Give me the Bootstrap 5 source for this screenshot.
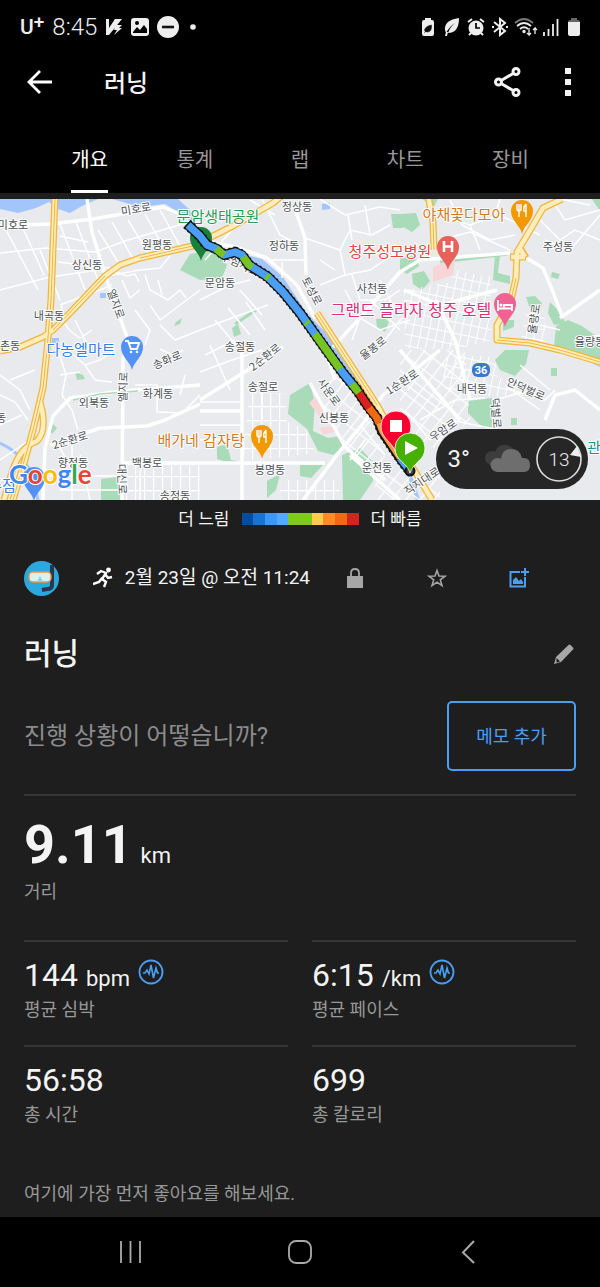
<!DOCTYPE html>
<html lang="ko">
<head>
<meta charset="utf-8">
<meta name="viewport" content="width=device-width, initial-scale=1">
<title>러닝</title>
<link href="https://cdn.jsdelivr.net/npm/bootstrap@5.3.0/dist/css/bootstrap.min.css" rel="stylesheet">
<style>
  :root { --ink: #f4f4f4; --dim: #989898; --line: #363636; --accent: #4a9ff5; --panel: #1e1e1e; }
  body { font-family: Roboto, "Noto Sans CJK KR", sans-serif; background: var(--panel); color: var(--ink); }
  svg { display: block; flex: none; }
  button { color: inherit; }
  .status { height: 54px; padding: 0 16px 0 20px; color: #eee; }
  .clock { font-size: 24px; line-height: 24px; font-weight: 300; }
  .carrier { font-size: 21px; line-height: 24px; font-weight: 500; }
  .carrier sup { font-size: 19px; top: -6px; line-height: 0; }
  .appbar { height: 56px; padding: 0 8px 0 16px; }
  .appbar h1 { font-size: 24px; line-height: 32px; margin-left: 40px; padding-top: 3px; }
  .icon-btn { background: none; border: 0; padding: 0; display: flex; align-items: center; justify-content: center; width: 48px; height: 48px; }
  .app-actions { gap: 12px; }
  .tabs { padding: 0 37px; height: 83px; }
  .tab { flex: 1 1 0; background: none; border: 0; padding: 0; display: flex; align-items: flex-end; justify-content: center; color: var(--dim); font-size: 20px; line-height: 24px; }
  .tab span { padding-bottom: 18px; border-bottom: 3px solid transparent; }
  .tab.active { color: #fff; }
  .tab.active span { border-color: #fff; }
  .map-box { margin-top: 6px; }
  .map-box > svg { width: 100%; height: auto; }
  .map-box text { font-family: "Noto Sans CJK KR", sans-serif; text-anchor: middle; paint-order: stroke; stroke: #fff; stroke-width: 2px; stroke-linejoin: round; }
  .area text { font-size: 11px; fill: #4a4f55; }
  .poi text { font-size: 15px; }
  .poi .wide-label { font-size: 16px; }
  .map-box .logo { font-family: Lato, sans-serif; font-size: 26px; font-weight: 700; text-anchor: start; }
  .map-box .shield { font-family: Roboto, sans-serif; font-size: 11px; font-weight: 700; stroke: none; fill: #fff; }
  .weather { right: 12px; bottom: 11px; height: 60px; padding: 0 6px 0 12px; background: #262626; font-size: 24px; }
  .map-box .wind { font-family: Roboto, sans-serif; font-size: 19px; font-weight: 300; stroke: none; fill: #eee; }
  .legend-row { height: 38px; font-size: 17px; line-height: 24px; gap: 12px; }
  .scale { width: 117px; height: 12px; }
  .page-pad { padding: 0 24px; }
  .meta { height: 80px; padding-right: 16px; }
  .meta .icon-btn { width: 82px; }
  .when { font-size: 19px; line-height: 24px; }
  .name-row { height: 72px; }
  .name-row h2 { font-size: 30px; line-height: 40px; }
  .appbar h1, .name-row h2 { font-weight: 500; }
  .name-row .icon-btn { width: 24px; }
  .note-row { height: 92px; }
  .note-row p { font-size: 24px; line-height: 32px; color: #8c8c8c; }
  .note-btn { width: 129px; height: 70px; font-size: 18px; --bs-btn-color: var(--accent); --bs-btn-border-color: var(--accent); --bs-btn-border-width: 2px; --bs-btn-border-radius: 5px; }
  .headline { margin-top: 12px; padding: 21px 0 36px; border-top: 2px solid var(--line); }
  .headline strong { font-size: 54px; line-height: 56px; font-weight: 700; }
  .headline .label { margin-top: 7px; }
  .unit { font-size: 22px; }
  .label { font-size: 18px; line-height: 24px; color: var(--dim); }
  .stats { display: grid; grid-template-columns: 1fr 1fr; column-gap: 24px; }
  .stat { border-top: 2px solid var(--line); padding: 13px 0 23px; }
  .value { font-family: Roboto, sans-serif; font-size: 32px; line-height: 40px; height: 40px; margin-bottom: 3px; }
  .likes { font-size: 18px; line-height: 24px; color: var(--dim); padding: 32px 0 11px; }
  .sysnav { height: 70px; padding: 0 46px; color: #aaa; }
  .sysnav .icon-btn { width: 168px; }
</style>
</head>
<body class="d-flex flex-column min-vh-100">
<header class="bg-black">
  <div class="status d-flex align-items-center justify-content-between">
    <div class="d-flex align-items-center gap-2">
      <span class="carrier">U<sup>+</sup></span>
      <span class="clock">8:45</span>
      <svg width="18" height="18" viewBox="0 0 18 18"><path d="M1 1h3v9l6-9h7L4 17H1zM11 7h6l-3 3h3l-8 7 3-5H9z" fill="#eee"/></svg>
      <svg width="18" height="18" viewBox="0 0 18 18"><rect width="18" height="18" rx="3" fill="#eee"/><circle cx="6" cy="5" r="2"/><path d="M2 14l4-5 3 3 4-5 3 4v4H2z"/></svg>
      <svg width="22" height="22" viewBox="0 0 22 22"><circle cx="11" cy="11" r="11" fill="#eee"/><path d="M5 11h12" stroke="#111" stroke-width="2.600"/></svg>
      <svg width="12" height="6" viewBox="0 0 12 6"><circle cx="6" cy="3" r="2.800" fill="#eee"/></svg>
    </div>
    <div class="d-flex align-items-center gap-1">
      <svg width="20" height="20" viewBox="0 0 20 20"><path d="M7 1h6v2h1q2 0 2 2v12q0 2-2 2H6q-2 0-2-2V5q0-2 2-2h1z" fill="#eee"/><path d="M13.500 8q.5 7-4 7-3 0-3-2 1-4 7-5M6 16l5-5" fill="#111" stroke="#111" stroke-width=".5"/></svg>
      <svg width="20" height="20" viewBox="0 0 20 20"><path d="M17 1Q2 3 3 13l1 3Q8 9 13 6 8 10 6 16q11 0 11-15M4 15l-1 4h2l1-4" fill="#eee"/></svg>
      <svg width="20" height="20" viewBox="0 0 20 20"><circle cx="10" cy="11" r="7.500" fill="#eee"/><path d="M2 5l4-3m12 3l-4-3M5 16l-2 2m12-2l2 2" stroke="#eee" stroke-width="2"/><path d="M10 6v5h4" stroke="#000" stroke-width="1.700" fill="none"/></svg>
      <svg width="20" height="20" viewBox="0 0 20 20" fill="none" stroke="#eee" stroke-width="2"><path d="M4 5l11 9-5 4V2l5 4-11 9M2 10h2m12 0h2"/></svg>
      <svg width="24" height="20" viewBox="0 0 24 20" fill="none" stroke="#eee" stroke-width="1.800"><path d="M1 6q9-8 18 0" stroke="#777"/><path d="M3 9q7-6 14 0M6 12q4-3.500 8 0"/><circle cx="10" cy="14.500" r=".8"/><path d="M15 11v7l-2-2m2 2l2-2m4 1v-6l-2 2m2-2l2 2" stroke-width="1.300"/></svg>
      <svg width="18" height="20" viewBox="0 0 18 20" stroke="#eee" stroke-width="1.800"><path d="M2 19v-4M6.500 19v-7M11 19V7M15.500 19V2"/></svg>
      <svg width="20" height="20" viewBox="0 0 20 20"><path d="M7 1h6v2h1q2 0 2 2v2H4V5q0-2 2-2h1z" fill="#666"/><path d="M4 5h12v12q0 2-2 2H6q-2 0-2-2z" fill="#eee"/></svg>
    </div>
  </div>
  <div class="appbar d-flex align-items-center">
    <button class="icon-btn" type="button" aria-label="뒤로"><svg width="26" height="26" viewBox="0 0 26 26" fill="none" stroke="#fff" stroke-width="2.800"><path d="M25 13H3M13 2L2 13l11 11"/></svg></button>
    <h1 class="mb-0">러닝</h1>
    <div class="app-actions d-flex ms-auto">
      <button class="icon-btn" type="button" aria-label="공유"><svg width="28" height="30" viewBox="0 0 28 30" fill="none" stroke="#f4f4f4" stroke-width="3"><path d="M8 13l12-7M8 17l12 7"/><circle cx="4.500" cy="15" r="3"/><circle cx="22" cy="4.500" r="3"/><circle cx="22" cy="25.500" r="3"/></svg></button>
      <button class="icon-btn" type="button" aria-label="메뉴"><svg width="6" height="28" viewBox="0 0 6 28" fill="#f4f4f4"><path d="M0 0h6v6H0zM0 11h6v6H0zM0 22h6v6H0z"/></svg></button>
    </div>
  </div>
  <nav class="tabs d-flex">
    <button class="tab active" type="button"><span>개요</span></button>
    <button class="tab" type="button"><span>통계</span></button>
    <button class="tab" type="button"><span>랩</span></button>
    <button class="tab" type="button"><span>차트</span></button>
    <button class="tab" type="button"><span>장비</span></button>
  </nav>
</header>

<main class="flex-grow-1">
  <div class="map-box position-relative">
    <svg viewBox="0 199 600 301" role="img" aria-label="경로 지도">
      <defs>
        <pattern id="blocks" width="9" height="14" patternUnits="userSpaceOnUse"><path d="M0 0H9M0 0V14" stroke="#fff" stroke-width="2.400"/></pattern>
        <pattern id="blocksTilt" width="11" height="15" patternUnits="userSpaceOnUse" patternTransform="rotate(38)"><path d="M0 0H11M0 0V15" stroke="#fff" stroke-width="2.400"/></pattern>
        <pattern id="blocksLean" width="8" height="11" patternUnits="userSpaceOnUse" patternTransform="rotate(12)"><path d="M0 0H8M0 0V11" stroke="#fff" stroke-width="2"/></pattern>
        <path id="pin" d="M0 25C-2 16-11 12-11 2A11 11 0 0 1 11 2C11 12 2 16 0 25Z"/>
      </defs>
      <rect y="199" width="600" height="301" fill="#e8eaed"/>
      <!-- water -->
      <g fill="#a3c5fb">
        <path d="M0 199V209L18 213 36 208 49 202 58 209 70 213 82 206 98 199ZM112 199L140 207 165 204 186 217 196 226 190 210 178 199Z"/>
        <path d="M228 250L262 259 283 277 306 312 326 333 352 372 375 402 366 402 320 345 290 306 262 274 232 260Z"/>
        <path d="M100 293h6v5h-6zM322 204l8-1v6l-8 1zM52 338h7v6h-7z"/>
        <path d="M0 443Q20 452 30 470L38 500" fill="none" stroke="#a3c5fb" stroke-width="3"/>
        <path d="M408 470l10 30" stroke="#a3c5fb" stroke-width="4"/>
      </g>
      <!-- parks -->
      <g fill="#a9dbb8">
        <path d="M180 270L190 254 212 250 227 265 222 278 200 280ZM391 214h12v14h-10zM376 319l8-1 5 4-4 10-8-5zM400 259l15-4 4 11-12 8-7-4zM412 274l12-3 6 10-8 9-9-6zM402 214l14-1 4 12-8 7-12-7zM422 199h16l-4 8z"/>
        <path d="M495 255h5l-2 18 12 3v8l-17-4zM503 320h11v7l-11 4zM526 297l9-1 7 7-3 10-10-7zM550 302l6 6 10 15-12 2-6-12zM556 326l12-6 14 6 18 13v28l-32-16-14-3zM552 272l8 2-2 5-7-2z"/>
        <path d="M75 372l8 3 2 4-8 1zM49 428l4-4 4 4-5 6zM101 479l16-2 4 23h-20zM176 322l6-4-2 6-6 2zM232 328l6-4 3 10-7 3zM592 199h8v12z"/>
        <path d="M290 395L310 383 315 403 313 431 328 438 340 436 345 445 333 455 318 451 307 429 297 421 288 414ZM342 455L360 448 372 461 373 481 360 500H343ZM300 465h23l-12 13-11-2zM267 481l13-7-4 16-9 8zM217 447l10-3 4 16 12 2-8 3-18-6z"/>
        <path d="M495 360L505 350H529L526 364 515 376 500 370ZM468 401L492 398V428H483L468 413ZM551 368h6v8h-6zM511 418h6v7h-6z"/>
        <path d="M235 324L256 310M440 262L508 254" stroke="#a9dbb8" stroke-width="3"/>
      </g>
      <path d="M433 267L455 259 453 275 433 282ZM309 403l6-6 14 20-5 4zM320 428l14-2 3 5-14 4z" fill="#f7d6d8"/>
      <!-- dense street blocks -->
      <path d="M250 393H286V421L306 430 316 453 250 461 242 455ZM122 464H200V500H122ZM280 480H340V500H280Z" fill="url(#blocks)"/>
      <path d="M335 370L362 405 400 490 345 450 320 400ZM400 350L465 350 470 420 438 450 400 430ZM375 470L440 470V500H375Z" fill="url(#blocksTilt)"/>
      <path d="M404 290L490 276 492 340 455 350 405 348ZM440 356L494 356 498 378 520 380 530 395 490 396 445 390ZM455 270L492 278 490 290 450 282ZM526 312H545V345H520Z" fill="url(#blocksLean)"/>
      <!-- side streets -->
      <g fill="none" stroke="#fff" stroke-width="1.500">
        <path d="M0 253L45 248 95 252 128 240 190 222M0 290L50 277 98 270M5 228L38 290M22 226L44 275M40 250L60 300M60 224L85 290M76 222L98 280M98 230L118 262M112 222L135 262M128 220L150 256M145 214L165 250M160 210L180 246M60 236L88 242M58 262L110 268"/>
        <path d="M60 305L100 290 112 285M62 305Q58 325 80 338L92 330M75 320L90 350M112 275L140 270 160 268 170 256M122 280L130 298 140 290M115 272l12 4 8 -2 4 8M145 275L150 290 168 300 180 290 186 298M158 280L162 295M160 325L175 340 200 330M135 310L150 330 145 345M150 305L160 320 200 290"/>
        <path d="M58 350L66 375 62 395 72 410 78 430M70 352L85 365 100 360 115 350M85 365L95 380 112 382M60 375L80 372M0 375L20 390 30 410M0 395L15 402 28 420M0 425L22 415M10 380L35 370"/>
        <path d="M135 385L157 385 157 412 182 413 200 395M160 349L175 356 183 350M185 375L180 395M200 372L232 360 262 350M210 345L230 390M200 330L240 315 268 305M205 355L235 340M215 320L240 350M228 308L250 335M246 302L265 330M200 300L230 285 250 280"/>
        <path d="M262 199L280 235 300 245M250 200L275 215M320 199L345 215 380 207 400 210M305 238L340 250 350 230 372 235 390 225M340 250L345 275 370 270 400 250M348 215L352 240M365 205L370 235M320 260L335 270M352 275L360 300 385 300 400 290M320 285L345 275M270 260H305M282 262V278M240 290L262 315M205 260L250 210"/>
        <path d="M345 290L360 318 380 330 410 320M360 318L352 340M370 300L400 330M380 280L395 310M385 340L402 318M440 215L470 225 500 215 540 235M450 200L462 225 490 240 515 235M500 199L495 215M440 240L470 232 510 250M540 220L560 240 575 230 600 240M545 240L570 250 600 215M555 205L565 220 600 210M560 199L590 205M470 225L480 250"/>
        <path d="M200 402L242 402M200 425L242 425M200 440H240M262 390V420M0 460L30 440M60 448L72 470 90 480M72 445V500M50 476H122M60 490H122M80 455L90 500M140 465V500M360 425L385 455M365 440L350 460M420 420L455 400 485 398M495 400L530 390 545 400 555 390M505 385L540 410M520 365L550 390M400 380L440 410M450 420L500 430M405 410L430 440M575 340L600 335M540 325L560 330"/>
      </g>
      <!-- main streets -->
      <g fill="none" stroke="#fff" stroke-width="3.500" stroke-linejoin="round">
        <path d="M0 226L50 224 93 219 163 207 190 218M87 199L92 232 105 275 128 340 123 360 122 500M295 209L305 238 306 275M200 240L235 247 267 258 297 285 315 318M333 347L360 318 400 272 420 260 510 253"/>
        <path d="M525 257L543 268 553 292 562 316M560 318L600 290"/>
        <path d="M43 500L45 448 53 416 70 398 123 391 200 385M50 445L100 428 147 426 165 420 200 404M200 400L243 373 283 347M200 411H242M242 345V500M200 463H325M122 463H200M303 500L340 451 362 425 383 395 440 350M310 383L345 447M350 455L400 500M400 350L460 420M436 300L455 340 470 400M404 290L440 305 497 290M545 420L555 395 575 390 600 410M325 350L335 380M345 447L385 480"/>
      </g>
      <path d="M73 400L100 394 138 391" fill="none" stroke="#a9dbb8" stroke-width="1.500"/>
      <!-- highways: casing, fill, centre line -->
      <g fill="none" stroke-linejoin="round">
        <path stroke="#f1b53c" stroke-width="7" d="M55 196L51 300 47 350 43 388 33 430 25 460 13 500M0 351L20 347 43 337 53 330 70 313 105 276 120 265 140 258 197 245 213 236 233 226 273 203 285 193M40 402Q48 430 37 441 20 447 12 472L4 500M317 313L343 353 377 405 407 458 432 500M428 195L433 222 434 250M562 199L543 208 532 227 517 252 516 278 511 300 497 325 497 340 530 343 560 350 600 362M510 257L526 257M519 246L526 258"/>
        <path stroke="#fdedbb" stroke-width="4.500" d="M55 196L51 300 47 350 43 388 33 430 25 460 13 500M0 351L20 347 43 337 53 330 70 313 105 276 120 265 140 258 197 245 213 236 233 226 273 203 285 193M40 402Q48 430 37 441 20 447 12 472L4 500M317 313L343 353 377 405 407 458 432 500M428 195L433 222 434 250M562 199L543 208 532 227 517 252 516 278 511 300 497 325 497 340 530 343 560 350 600 362M511 257L525 257M519 247L525 257"/>
        <path stroke="#f1b53c" stroke-width="1" d="M55 199L51 300 47 350 43 388 33 430 13 500M53 330L105 276M140 258L197 245M317 313L343 353 377 405M516 278L511 300M433 222L434 250M497 340L530 343 560 350 600 362"/>
      </g>
      <!-- place names -->
      <g class="area">
        <text x="13" y="229">미호로</text>
        <text x="136" y="213" transform="rotate(-10 136 209)">미호로</text>
        <text x="157" y="249">원평동</text><text x="87" y="269">상신동</text><text x="49" y="320">내곡동</text>
        <text x="5" y="350">외촌동</text><text x="297" y="211">정상동</text><text x="284" y="250">정하동</text>
        <text x="220" y="287">문암동</text><text x="372" y="293">사천동</text><text x="558" y="251">주성동</text>
        <text x="590" y="346">율량동</text><text x="240" y="351">송절동</text><text x="94" y="407">외북동</text>
        <text x="158" y="398">화계동</text><text x="73" y="467">향정동</text><text x="147" y="467">백봉로</text>
        <text x="175" y="500">송정동</text><text x="263" y="391">송절로</text><text x="334" y="422">신봉동</text>
        <text x="270" y="474">봉명동</text><text x="377" y="472">운천동</text><text x="472" y="393">내덕동</text><text x="-9" y="422">정봉동</text>
        <text x="116" y="308" transform="rotate(70 116 304)">엘지로</text>
        <text x="123" y="391" transform="rotate(-88 123 387)">엘지로</text>
        <text x="122" y="483" transform="rotate(88 122 479)">대신로</text>
        <text x="167" y="364" transform="rotate(-22 167 360)">송화로</text>
        <text x="70" y="444" transform="rotate(-17 70 440)">2순환로</text>
        <text x="265" y="361" transform="rotate(-38 265 357)">2순환로</text>
        <text x="402" y="386" transform="rotate(-33 402 382)">1순환로</text>
        <text x="373" y="352" transform="rotate(-38 373 348)">율봉로</text>
        <text x="312" y="295" transform="rotate(62 312 291)">토성로</text>
        <text x="240" y="268" transform="rotate(25 240 264)">무심서로</text>
        <text x="329" y="396" transform="rotate(54 329 392)">사운로</text>
        <text x="534" y="323" transform="rotate(-82 534 319)">율량로</text>
        <text x="526" y="393" transform="rotate(24 526 389)">안덕벌로</text>
        <text x="496" y="417" transform="rotate(85 496 413)">덕벌로</text>
        <text x="443" y="434" transform="rotate(-34 443 430)">우암로</text>
        <text x="422" y="485" transform="rotate(-34 422 481)">직지대로</text>
      </g>
      <g class="poi">
        <use href="#pin" x="201" y="236" fill="#188038"/>
        <text x="218" y="222" fill="#259a59">문암생태공원</text>
        <text x="464" y="220" fill="#d5791b">야채꽃다모아</text>
        <text x="390" y="257" fill="#e0483e">청주성모병원</text>
        <text class="wide-label" x="411" y="316" fill="#dc2f79">그랜드 플라자 청주 호텔</text>
        <text x="81" y="355" fill="#3a7fe8">다농엘마트</text>
        <text x="201" y="446" fill="#d5791b">배가네 감자탕</text>
        <text x="2" y="491" fill="#3a7fe8">주점</text>
        <text x="594" y="453" fill="#12948a">관</text>
        <use href="#pin" x="522" y="209" fill="#f29900"/>
        <path d="M517 204v5q0 2 2 2v6M519 204v7M521 204v5q0 2-2 2M526 204v13M526 204q-3 3-2 7h2" fill="none" stroke="#fff" stroke-width="1.400"/>
        <use href="#pin" x="448" y="245" fill="#e8615a"/>
        <path d="M444 241v11M452 241v11M444 246.500h8" stroke="#fff" stroke-width="2.600"/>
        <use href="#pin" x="505" y="302" fill="#f06292"/>
        <path d="M498 300v11M498 308.500h14v2.500M512 308v-3h-8v3" fill="none" stroke="#fff" stroke-width="1.800"/><circle cx="501" cy="305" r="1.500" fill="#fff"/>
        <use href="#pin" x="132" y="345" fill="#5491f5"/>
        <path d="M125 341h3l3 8h6l2-6h-10" fill="none" stroke="#fff" stroke-width="2"/><circle cx="131" cy="352" r="1.300" fill="#fff"/><circle cx="137" cy="352" r="1.300" fill="#fff"/>
        <use href="#pin" x="262" y="434" fill="#f29900"/>
        <path d="M257 430v5q0 2 2 2v6M259 430v7M261 430v5q0 2-2 2M266 430v13M266 430q-3 3-2 7h2" fill="none" stroke="#fff" stroke-width="1.400"/>
        <use href="#pin" x="34" y="476" fill="#5491f5"/>
      </g>
      <rect x="472" y="363" width="18" height="14" rx="6" fill="#3b78c9"/>
      <text class="shield" x="481" y="374">36</text>
      <text class="logo" x="9" y="484"><tspan fill="#4285f4">G</tspan><tspan fill="#ea4335">o</tspan><tspan fill="#fbbc05">o</tspan><tspan fill="#4285f4">g</tspan><tspan fill="#34a853">l</tspan><tspan fill="#ea4335">e</tspan></text>
      <!-- recorded track -->
      <g fill="none" stroke-linejoin="round">
        <path d="M187 224L200 236 207 245 217 249 224 255 235 252 242 255 249 265 268 277 283 292 300 313 310 327 325 348 343 373 357 390 367 405 377 418 382 431 400 458 410 471" stroke="#111" stroke-width="10"/>
        <path d="M187 224L200 236 207 245 217 249 224 255 235 252 242 255 249 265 268 277 283 292 300 313 310 327 325 348 343 373 357 390 367 405 377 418 382 431 400 458 410 471" stroke="#111" stroke-width="11" stroke-dasharray="2 3"/>
        <path d="M188 225L200 236 207 245 217 249 224 255 235 252 242 255 249 265 268 277 283 292 300 313 310 327 325 348 343 373 357 390" stroke="#4a9ff5" stroke-width="7.500"/>
        <path d="M216 249L224 255M243 257L249 265 252 267M266 276l3 2M306 322l2 2M315 334L325 348 340 369M352 384L359 393" stroke="#78c41e" stroke-width="7.500"/>
        <path d="M359 393L367 405 370 409" stroke="#d92120" stroke-width="7.500"/>
        <path d="M369 408L377 418 379 423" stroke="#ee6a14" stroke-width="7.500"/>
        <path d="M379 423L382 431 400 458" stroke="#fd9a3a" stroke-width="6"/>
        <path d="M400 458L410 471" stroke="#4a9ff5" stroke-width="7"/>
        <circle cx="410" cy="471" r="4.500" fill="#444" stroke="#111" stroke-width="2"/>
      </g>
      <path d="M396 453C392 441 381 439 381 426A15 15 0 0 1 411 426C411 439 400 441 396 453Z" fill="#f8002f" stroke="#fff" stroke-width=".8"/>
      <rect x="390" y="420" width="12" height="12" fill="#fff"/>
      <path d="M410 473C407 462 395 461 395 448A15 15 0 0 1 425 448C425 461 413 462 410 473Z" fill="#45b000" stroke="#fff" stroke-width=".8"/>
      <path d="M405 441l13 7-13 7z" fill="#fff"/>
    </svg>
    <div class="weather position-absolute rounded-pill d-flex align-items-center">
      <span>3°</span>
      <svg class="ms-2 me-1" width="54" height="44" viewBox="0 0 54 44"><path d="M14 28a7 7 0 0 1 0-14q2 0 3 1 3-9 12-7 6 2 8 8l-18 12z" fill="#3d3d3d"/><path d="M20 35a7 7 0 0 1-1-14q3 0 4 1 1-10 10-10 9 0 11 9 8-1 8 7 0 7-6 7z" fill="#6e6e6e"/></svg>
      <svg width="46" height="46" viewBox="0 0 46 46"><circle cx="23" cy="23" r="22" fill="none" stroke="#ddd" stroke-width="1.600"/><path d="M34 19l7-9 4 11z" fill="#eee"/><text class="wind" x="23" y="30">13</text></svg>
    </div>
  </div>

  <div class="legend-row d-flex align-items-center justify-content-center">
    <span>더 느림</span>
    <div class="scale d-flex">
      <i class="flex-fill" style="background:#004d9f"></i><i class="flex-fill" style="background:#1873d3"></i><i class="flex-fill" style="background:#3c97f5"></i><i class="flex-fill" style="background:#55a8ff"></i><i class="flex-fill" style="background:#80ca1c"></i><i class="flex-fill" style="background:#80ca1c"></i><i class="flex-fill" style="background:#fdcb4e"></i><i class="flex-fill" style="background:#fb8c27"></i><i class="flex-fill" style="background:#ee6a14"></i><i class="flex-fill" style="background:#d92120"></i>
    </div>
    <span>더 빠름</span>
  </div>

  <div class="page-pad">
    <div class="meta d-flex align-items-center">
      <svg width="35" height="35" viewBox="0 0 35 35"><circle cx="17.500" cy="17.500" r="17.500" fill="#2ba9df"/><path d="M28 4v20q0 4-5 4l-5 1" fill="none" stroke="#24384f" stroke-width="4"/><rect x="5" y="11" width="22" height="10" rx="4" fill="#d9f0f5" stroke="#e8953d" stroke-width="1.400"/><path d="M13 21l3-6 3 6z" fill="#8ccfe2"/></svg>
      <svg class="ms-auto me-2" width="20" height="22" viewBox="0 0 20 22"><circle cx="15.500" cy="3" r="2.400" fill="#fff"/><path d="M4 7l4-3 5 2-4 6 4 3-2 5M12 7l3 4 4-1M9 11l-3 4-6 2" fill="none" stroke="#fff" stroke-width="2.400"/></svg>
      <span class="when ms-1">2월 23일 @ 오전 11:24</span>
      <button class="icon-btn ms-1" type="button" aria-label="개인정보"><svg width="16" height="20" viewBox="0 0 16 20"><path d="M0 8h16v12H0z" fill="#a6a6a6"/><path d="M4 9V5q0-4 4-4t4 4v4" fill="none" stroke="#a6a6a6" stroke-width="1.800"/></svg></button>
      <button class="icon-btn" type="button" aria-label="즐겨찾기"><svg width="20" height="20" viewBox="0 0 20 20"><path d="M10 2.500l2 5.500 6 .2-4.700 3.700 1.700 5.700-5-3.400-5 3.400 1.700-5.700L2 8.200 8 8z" fill="none" stroke="#a6a6a6" stroke-width="1.600"/></svg></button>
      <button class="icon-btn" type="button" aria-label="사진 추가"><svg width="20" height="20" viewBox="0 0 20 20"><path d="M11 4H1.500v14.500H16V9M16 0v8M12 4h8" fill="none" stroke="#4a9ff5" stroke-width="2"/><path d="M4 16v-4l3-3 3 4 2-2 2 3v2z" fill="#4a9ff5"/></svg></button>
    </div>
    <div class="name-row d-flex align-items-center justify-content-between">
      <h2 class="mb-0">러닝</h2>
      <button class="icon-btn" type="button" aria-label="이름 편집"><svg width="20" height="20" viewBox="0 0 20 20"><path d="M0 20l2-7L14.500 1q1-1 2 0L19 3.500q1 1 0 2L7 18z" fill="#a6a6a6"/><path d="M2.500 14l3.500 3.500-3.500 1z" fill="#1e1e1e"/></svg></button>
    </div>
    <div class="note-row d-flex align-items-center justify-content-between">
      <p class="mb-0">진행 상황이 어떻습니까?</p>
      <button class="btn note-btn" type="button">메모 추가</button>
    </div>

    <section class="headline">
      <div class="d-flex align-items-baseline"><strong>9.11</strong><span class="unit ms-2">km</span></div>
      <div class="label">거리</div>
    </section>
    <section class="stats">
      <div class="stat">
        <div class="value d-flex align-items-baseline">144<span class="unit ms-2">bpm</span><svg class="ms-2 mt-1 align-self-start" width="26" height="26" viewBox="0 0 26 26" fill="none" stroke="#4a9ff5"><circle cx="13" cy="13" r="11.500" stroke-width="1.800"/><path d="M5 14h2l2-3 2 4 2-9 2.500 13L18 9l1.500 5H21" stroke-width="1.600"/></svg></div>
        <div class="label">평균 심박</div>
      </div>
      <div class="stat">
        <div class="value d-flex align-items-baseline">6:15<span class="unit ms-2">/km</span><svg class="ms-2 mt-1 align-self-start" width="26" height="26" viewBox="0 0 26 26" fill="none" stroke="#4a9ff5"><circle cx="13" cy="13" r="11.500" stroke-width="1.800"/><path d="M5 14h2l2-3 2 4 2-9 2.500 13L18 9l1.500 5H21" stroke-width="1.600"/></svg></div>
        <div class="label">평균 페이스</div>
      </div>
      <div class="stat"><div class="value">56:58</div><div class="label">총 시간</div></div>
      <div class="stat"><div class="value">699</div><div class="label">총 칼로리</div></div>
    </section>
    <div class="likes">여기에 가장 먼저 좋아요를 해보세요.</div>
  </div>
</main>

<footer class="sysnav bg-black d-flex align-items-center justify-content-between">
  <button class="icon-btn" type="button" aria-label="최근 앱"><svg width="24" height="24" viewBox="0 0 24 24" stroke="#aaa" stroke-width="1.800"><path d="M3 1v22M12.500 1v22M22 1v22"/></svg></button>
  <button class="icon-btn" type="button" aria-label="홈"><svg width="24" height="24" viewBox="0 0 24 24"><rect x="1" y="1" width="22" height="22" rx="7" fill="none" stroke="#aaa" stroke-width="1.800"/></svg></button>
  <button class="icon-btn" type="button" aria-label="뒤로"><svg width="24" height="24" viewBox="0 0 24 24" fill="none" stroke="#aaa" stroke-width="2"><path d="M16 1L5 12.500 16 23"/></svg></button>
</footer>
<script src="https://cdn.jsdelivr.net/npm/bootstrap@5.3.0/dist/js/bootstrap.bundle.min.js"></script>
</body>
</html>
